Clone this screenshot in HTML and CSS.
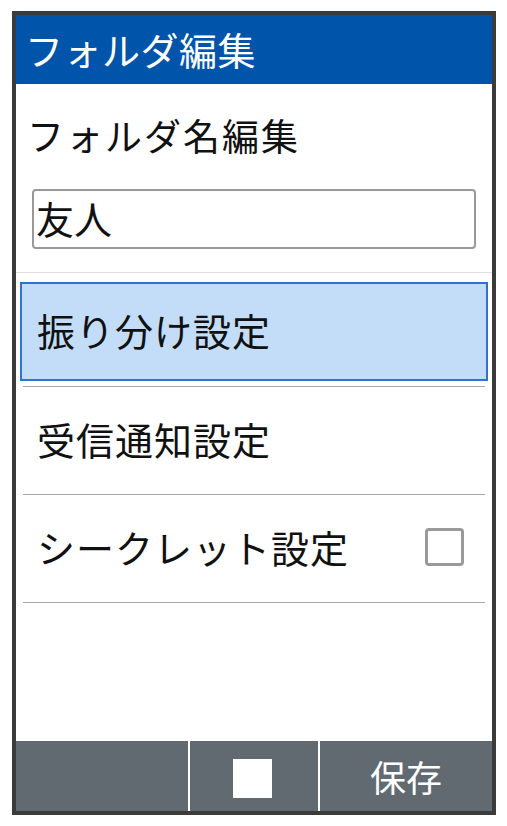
FILE: index.html
```html
<!DOCTYPE html>
<html lang="ja">
<head>
<meta charset="utf-8">
<link rel="stylesheet" href="styles.css">
</head>
<body>
<div class="phone">
  <div class="header">フォルダ編集</div>
  <div class="content">
    <div class="label">フォルダ名編集</div>
    <div class="input">友人</div>
    <div class="sep-light"></div>
    <div class="item selected">振り分け設定</div>
    <div class="sep"></div>
    <div class="item">受信通知設定</div>
    <div class="sep"></div>
    <div class="item">
      <span class="item-text">シークレット設定</span>
      <span class="checkbox"></span>
    </div>
    <div class="sep"></div>
  </div>
  <div class="softkeys">
    <div class="key key-left"></div>
    <div class="key key-center"><span class="square"></span></div>
    <div class="key key-right">保存</div>
  </div>
</div>
</body>
</html>
```

FILE: styles.css
```css
* { box-sizing: border-box; }
html, body { margin: 0; padding: 0; background: #ffffff; }
body {
  font-family: "Noto Sans CJK JP", "Noto Sans", sans-serif;
  color: #111111;
}
.phone {
  margin: 11px 0 0 12px;
  width: 484px;
  height: 804px;
  border: 4px solid #3b3b3b;
  display: flex;
  flex-direction: column;
  background: #ffffff;
}
.header {
  height: 69px;
  background: #0055aa;
  color: #ffffff;
  font-size: 38px;
  letter-spacing: 0.5px;
  line-height: 1;
  display: flex;
  align-items: center;
  padding-left: 9px;
  padding-bottom: 2px;
  flex: none;
}
.content {
  flex: 1;
  display: flex;
  flex-direction: column;
}
.label {
  height: 105px;
  display: flex;
  align-items: center;
  padding-left: 11px;
  padding-bottom: 3px;
  font-size: 37px;
  letter-spacing: 2px;
  line-height: 1;
}
.input {
  margin: 0 16px;
  height: 60px;
  border: 2px solid #999999;
  border-radius: 4px;
  display: flex;
  align-items: center;
  padding-left: 2px;
  padding-bottom: 2px;
  font-size: 38px;
  line-height: 1;
}
.sep-light {
  margin-top: 23px;
  height: 1px;
  background: #dddddd;
}
.item {
  height: 107px;
  display: flex;
  align-items: center;
  justify-content: space-between;
  padding-left: 21px;
  padding-right: 28px;
  padding-bottom: 3px;
  font-size: 38px;
  letter-spacing: 1px;
  line-height: 1;
}
.item.selected {
  margin: 9px 4px 5px 4px;
  height: 99px;
  border: 2px solid #2a74d2;
  background: #c3ddf8;
  padding-left: 15px;
}
.sep {
  margin: 0 7px;
  height: 1px;
  background: #a9a9a9;
}
.checkbox {
  width: 39px;
  height: 38px;
  border: 3px solid #9a9a9a;
  border-radius: 4px;
  background: #ffffff;
}
.softkeys {
  height: 70px;
  flex: none;
  background: #616a70;
  display: flex;
}
.key {
  display: flex;
  align-items: center;
  justify-content: center;
  color: #ffffff;
  font-size: 36px;
  line-height: 1;
}
.key-left { width: 174px; border-right: 2px solid #ffffff; }
.key-center { width: 130px; border-right: 2px solid #ffffff; padding-top: 5px; }
.key-right { flex: 1; }
.square {
  width: 39px;
  height: 39px;
  background: #ffffff;
  margin-left: -3px;
}
```
